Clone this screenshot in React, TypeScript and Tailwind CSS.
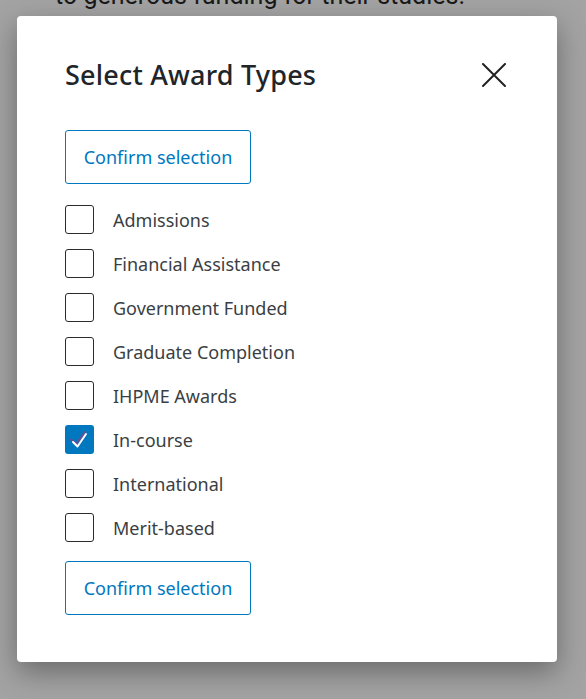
import { useState } from "react";

const awardTypes = [
  "Admissions",
  "Financial Assistance",
  "Government Funded",
  "Graduate Completion",
  "IHPME Awards",
  "In-course",
  "International",
  "Merit-based",
];

function Checkbox({ checked }: { checked: boolean }) {
  if (checked) {
    return (
      <span className="flex h-[29px] w-[29px] shrink-0 items-center justify-center rounded-[3px] bg-[#0078bf]">
        <svg width="29" height="29" viewBox="0 0 29 29" fill="none">
          <path d="M6 14.5l5 4.5 9-12" stroke="#6a4c93" strokeWidth="2" strokeLinecap="round" strokeLinejoin="round" />
          <path d="M8 17l4.5 4.5L21 9" stroke="#fff" strokeWidth="2" strokeLinecap="round" strokeLinejoin="round" />
        </svg>
      </span>
    );
  }
  return <span className="h-[29px] w-[29px] shrink-0 rounded-[3px] border border-[#2b2b2b] bg-white" />;
}

function ConfirmButton() {
  return (
    <button className="h-[54px] w-[186px] rounded-[3px] border-[1.5px] border-[#0078bf] bg-white text-[18px] text-[#0078bf]">
      Confirm selection
    </button>
  );
}

export default function App() {
  const [selected, setSelected] = useState<string[]>(["In-course"]);

  function toggle(name: string) {
    setSelected((s) => (s.includes(name) ? s.filter((n) => n !== name) : [...s, name]));
  }

  return (
    <div className="relative h-[699px] w-[586px] overflow-hidden bg-white" style={{ fontFamily: '"Noto Sans", "Open Sans", sans-serif' }}>
      {/* page behind the overlay */}
      <p className="-mt-[19px] pl-[55px] text-[25px] leading-[30px] text-[#2a2a2a]" style={{ fontFamily: "Roboto, sans-serif" }}>
        to generous funding for their studies.
      </p>

      {/* overlay */}
      <div className="absolute inset-0 bg-black/[0.36]" />

      {/* modal */}
      <div className="absolute left-[17px] top-[16px] h-[646px] w-[540px] rounded-[4px] bg-white px-[48px] pt-[40px] shadow-[0_10px_28px_rgba(0,0,0,0.35)]">
        <div className="flex items-center justify-between">
          <h2 className="text-[27px] font-medium leading-[38px] tracking-[0.2px] text-[#212529]">Select Award Types</h2>
          <button className="mr-[2px] flex h-[26px] w-[26px] items-center justify-center">
            <svg width="24" height="24" viewBox="0 0 24 24" fill="none">
              <path d="M1 1l22 22M23 1L1 23" stroke="#222" strokeWidth="2" strokeLinecap="round" />
            </svg>
          </button>
        </div>

        <div className="mt-[36px]">
          <ConfirmButton />
        </div>

        <ul className="mt-[21px] flex flex-col">
          {awardTypes.map((t) => (
            <li key={t} className="flex h-[44px] cursor-pointer items-start gap-[19px]" onClick={() => toggle(t)}>
              <Checkbox checked={selected.includes(t)} />
              <span className="text-[18px] leading-[30px] text-[#3a3f44]">{t}</span>
            </li>
          ))}
        </ul>

        <div className="mt-[4px]">
          <ConfirmButton />
        </div>
      </div>
    </div>
  );
}
